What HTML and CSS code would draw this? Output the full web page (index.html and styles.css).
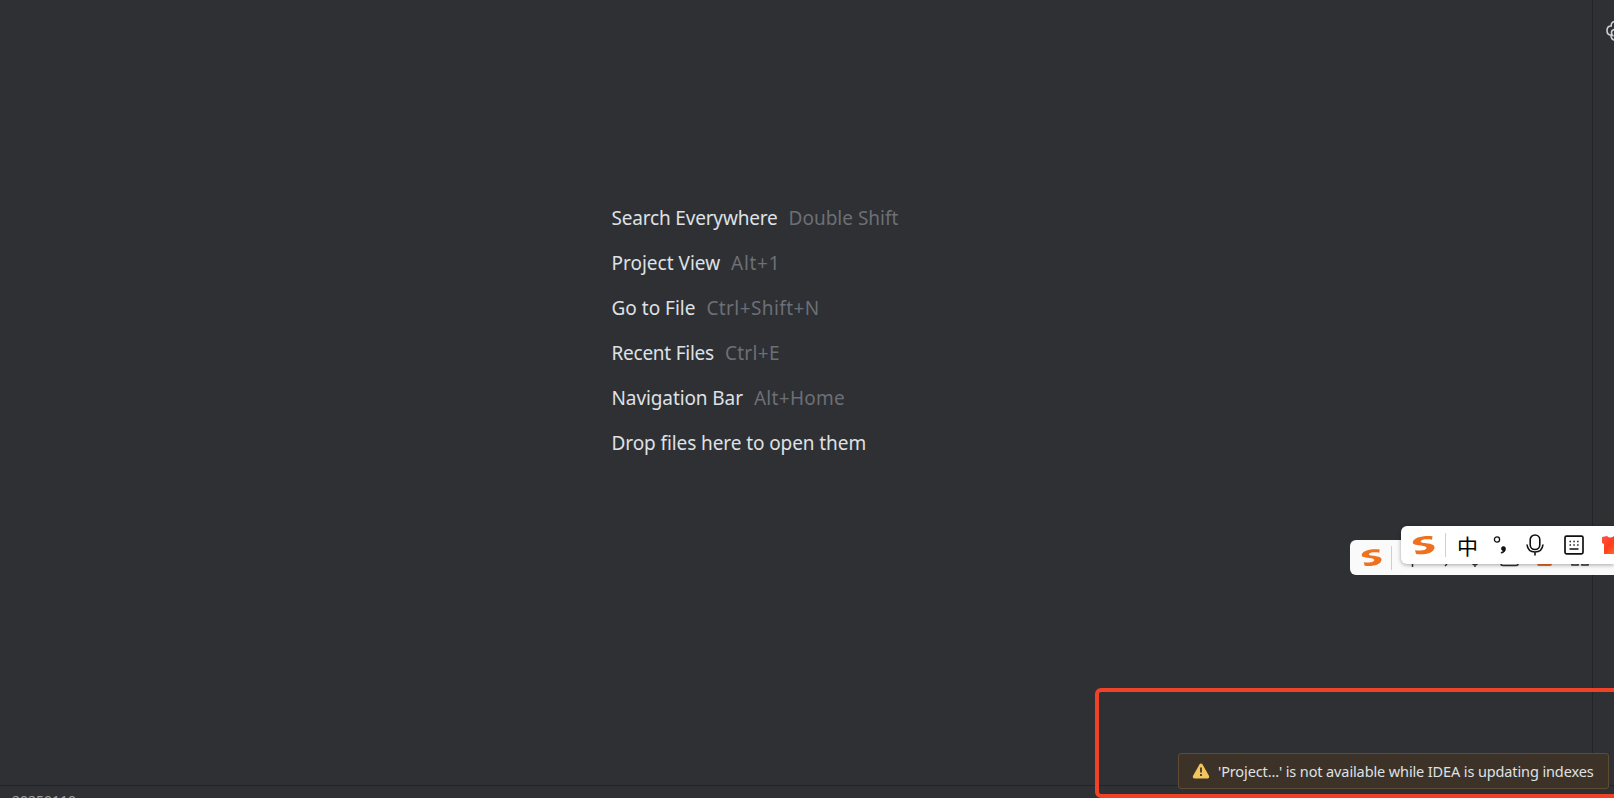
FILE: index.html
```
<!DOCTYPE html>
<html lang="en">

<head>
    <meta charset="UTF-8" />
    <title>IDEA</title>
    <link rel="stylesheet" href="styles.css">
</head>

<body>
    <div class="workspace">
        <!-- Empty editor -->
        <div class="editor">
            <ul class="hints">
                <li class="hint-search"><span>Search Everywhere</span><kbd>Double Shift</kbd></li>
                <li class="hint-project"><span>Project View</span><kbd>Alt+1</kbd></li>
                <li class="hint-file"><span>Go to File</span><kbd>Ctrl+Shift+N</kbd></li>
                <li class="hint-recent"><span>Recent Files</span><kbd>Ctrl+E</kbd></li>
                <li class="hint-nav"><span>Navigation Bar</span><kbd>Alt+Home</kbd></li>
                <li class="hint-drop"><span>Drop files here to open them</span></li>
            </ul>
        </div>
        <!-- Right tool stripe -->
        <div class="stripe">
            <svg class="stripe-icon" width="22" height="22" viewBox="0 0 22 22" fill="none" stroke="#ced0d6" stroke-width="1.6">
                <path d="M9 1.500C6.500 1.500 5 3.500 5.200 6C2.500 6 1 8 1 10.500C1 13 2.500 15 5 15C5 18 6.500 20 9 20M9 9.500C6.500 9.500 5.500 11 5.500 12.500C5.500 14 6 15.500 7.500 16" />
            </svg>
        </div>
    </div>
    <div class="statusbar"><span>20250110</span></div>

    <!-- Input method bars -->
    <div class="ime ime-back">
        <svg class="logo" width="21" height="19" viewBox="0 0 23 20">
            <path d="M20.500 1.200C12 .2 1 2.200 .8 7.500C.6 11.500 14.500 9.500 14.500 12.800C14.200 15.800 8 15.800 3 15.200L4 19C12 20 22.300 18.500 22.500 12.200C22.500 7.200 8.500 9 8.700 6.500C9.200 4.200 15 4 20 4.700Z" fill="#ed7220" />
        </svg>
        <i class="divider"></i>
        <svg class="peek" width="210" height="35" viewBox="0 0 210 35" fill="none" stroke="#333" stroke-width="1.500">
            <path d="M20.500 15V27M55 24L53 26M80 23Q83 27 86 23M83 25V27M109 20V24Q109 25.500 111 25.500H124Q126 25.500 126 24V20" />
            <path d="M145 23H160V24Q160 26 158 26H147Q145 26 145 24Z" fill="#f06a20" stroke="none" />
            <path d="M180 20V25H186V20M190 20V25H196V20" />
        </svg>
    </div>
    <div class="ime ime-front">
        <svg class="logo" width="23" height="20" viewBox="0 0 23 20">
            <path d="M20.500 1.200C12 .2 1 2.200 .8 7.500C.6 11.500 14.500 9.500 14.500 12.800C14.200 15.800 8 15.800 3 15.200L4 19C12 20 22.300 18.500 22.500 12.200C22.500 7.200 8.500 9 8.700 6.500C9.200 4.200 15 4 20 4.700Z" fill="#ed7220" />
        </svg>
        <i class="divider"></i>
        <span class="lang">中</span>
        <svg class="punct" width="14" height="20" viewBox="0 0 14 20">
            <circle cx="4" cy="4.500" r="2.600" fill="none" stroke="#111" stroke-width="1.300" />
            <path d="M10 11.500A2.300 2.300 0 0 1 12.500 14C12.500 16.500 10.500 18 8.300 18.200L8 17.300C9.500 17 10 16.500 10.300 15.800A2.200 2.200 0 0 1 10 11.500Z" fill="#111" stroke="#111" stroke-width=".6" />
        </svg>
        <svg class="mic" width="18" height="22" viewBox="0 0 18 22" fill="none" stroke="#111" stroke-width="1.600">
            <rect x="4.200" y="1" width="9.600" height="14.500" rx="4.800" />
            <path d="M1 10.500C1.500 15 4.500 18 9 18S16.500 15 17 10.500M9 18V21.500" />
        </svg>
        <svg class="keys" width="20" height="20" viewBox="0 0 20 20">
            <rect x="1" y="1.200" width="18" height="17.600" rx="1.500" fill="none" stroke="#111" stroke-width="1.700" />
            <path d="M5.500 6.500H15M5.500 10H15" stroke="#222" stroke-width="1.500" stroke-dasharray="1.500 2.300" />
            <path d="M5.500 14H14.500" stroke="#111" stroke-width="1.300" />
        </svg>
        <svg class="shirt" width="20" height="20" viewBox="0 0 20 20">
            <defs>
                <linearGradient id="red" x1="0" y1="0" x2="1" y2="1">
                    <stop offset="0" stop-color="#ff5548" />
                    <stop offset=".45" stop-color="#ff3c1c" />
                    <stop offset="1" stop-color="#ff7a30" />
                </linearGradient>
            </defs>
            <path d="M1 2L6 1Q9 4 13 1L19 2V8H17V19H3V9L1 8Z" fill="url(#red)" />
        </svg>
    </div>

    <!-- Highlighted notification -->
    <div class="highlight"></div>
    <div class="notice">
        <svg width="18" height="16" viewBox="0 0 18 16">
            <path d="M9 .5Q10 .5 10.600 1.500L16.800 12.500Q18 15.500 15.300 15.500H2.700Q0 15.500 1.200 12.500L7.400 1.500Q8 .5 9 .5Z" fill="#f2c55c" />
            <path d="M9 4.500V9.500M9 11V13" stroke="#46362a" stroke-width="1.800" />
        </svg>
        <span>'Project...' is not available while IDEA is updating indexes</span>
    </div>
</body>

</html>
```
FILE: styles.css
```
* {
    box-sizing: border-box;
    margin: 0;
    padding: 0;
}

body {
    display: flex;
    flex-direction: column;
    height: 798px;
    overflow: hidden;
    background: #2e3034;
    font-family: "Noto Sans", "Noto Sans CJK SC", sans-serif;
}

.workspace {
    display: flex;
    height: 786px;
    border-bottom: 1px solid #222327;
}

.editor {
    flex: 1;
    padding: 196px 0 0 611.5px;
}

.hints {
    list-style: none;
}

.hints li {
    display: flex;
    gap: 11px;
    height: 45.1px;
    line-height: 45px;
    font-size: 19px;
    color: #dfe1e5;
    white-space: nowrap;
}

.hints kbd {
    font-family: inherit;
    color: #6c6f76;
}

.hint-search span {
    letter-spacing: -0.18px;
}

.hint-project kbd {
    letter-spacing: 0.7px;
}

.hint-file kbd {
    letter-spacing: 0.4px;
}

.hint-recent span {
    letter-spacing: -0.25px;
}

.hint-recent kbd {
    letter-spacing: 0.3px;
}

.hint-nav span {
    letter-spacing: -0.1px;
}

.hint-nav kbd {
    letter-spacing: 0.3px;
}

.hint-drop span {
    letter-spacing: -0.09px;
}

.stripe {
    width: 22px;
    border-left: 1px solid #232428;
    padding: 20px 0 0 13px;
}

.stripe-icon {
    display: block;
}

.statusbar {
    height: 12px;
    padding: 5px 0 0 12px;
    overflow: hidden;
    font-size: 14px;
    line-height: 20px;
    color: #9da0a8;
}

/* Input method bars */
.ime {
    position: absolute;
    display: flex;
    align-items: center;
    background: #fff;
    border-radius: 6px 0 0 6px;
    overflow: hidden;
}

.ime svg {
    flex: none;
}

.ime-back {
    left: 1350px;
    top: 540px;
    width: 264px;
    height: 35px;
    padding-left: 11px;
    background: #fafafa;
}

.ime-front {
    left: 1401px;
    top: 526px;
    width: 213px;
    height: 38px;
    padding-left: 11px;
    box-shadow: 0 1px 4px rgba(0, 0, 0, 0.35);
}

.divider {
    flex: none;
    width: 1px;
    height: 24px;
    margin-left: 10px;
    background: #cfcfcf;
}

.ime-back .divider {
    margin-left: 9px;
}

.lang {
    margin-left: 11px;
    width: 21px;
    font: 400 21px/36px "Noto Sans CJK SC", sans-serif;
    color: #000;
}

.punct {
    margin-left: 15px;
}

.mic {
    margin-left: 19px;
}

.keys {
    margin-left: 20px;
}

.shirt {
    margin-left: 17px;
}

.highlight {
    position: absolute;
    left: 1095px;
    top: 687.5px;
    width: 530px;
    height: 110px;
    border: 4px solid #f04226;
    border-radius: 6px;
}

.notice {
    position: absolute;
    left: 1178px;
    top: 753px;
    width: 431px;
    height: 36px;
    display: flex;
    align-items: center;
    gap: 8px;
    padding-left: 13px;
    border: 1px solid #5e4d33;
    border-radius: 3px;
    background: #3d3228;
    color: #dfe1e5;
    font-size: 14.5px;
    letter-spacing: -0.12px;
    white-space: nowrap;
}
```
